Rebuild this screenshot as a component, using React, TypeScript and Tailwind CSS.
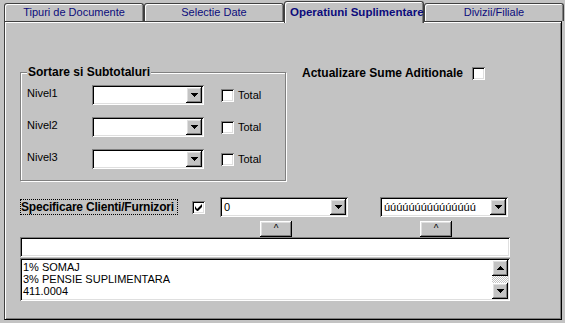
import React from "react";

const raised =
  "bg-[#c3c3c3] shadow-[inset_-1px_-1px_0_#000000,inset_1px_1px_0_#ffffff,inset_-2px_-2px_0_#808080,inset_2px_2px_0_#dfdfdf]";
const sunken =
  "bg-white shadow-[inset_1px_1px_0_#808080,inset_-1px_-1px_0_#ffffff,inset_2px_2px_0_#000000,inset_-2px_-2px_0_#dfdfdf]";

function Arrow({ up = false }: { up?: boolean }) {
  return (
    <svg width="7" height="4" viewBox="0 0 7 4" className={up ? "rotate-180" : ""}>
      <path d="M0 0h7v1H0zM1 1h5v1H1zM2 2h3v1H2zM3 3h1v1H3z" fill="#000" />
    </svg>
  );
}

function Combo({ width, value }: { width: string; value?: string }) {
  return (
    <div className={`${sunken} ${width} h-[20px] flex items-center p-[2px]`}>
      <span className="flex-1 pl-[2px] text-[11px] leading-[16px] text-black whitespace-nowrap overflow-hidden">
        {value}
      </span>
      <div className={`${raised} w-[16px] h-[16px] flex items-center justify-center`}>
        <Arrow />
      </div>
    </div>
  );
}

function Check({ checked = false }: { checked?: boolean }) {
  return (
    <div className={`${sunken} w-[13px] h-[13px] shrink-0 flex items-center justify-center`}>
      {checked && (
        <svg width="7" height="7" viewBox="0 0 7 7">
          <path d="M0 2v3l2 2h1l4-4V0L2 5z" fill="#000" />
        </svg>
      )}
    </div>
  );
}

const tabs = ["Tipuri de Documente", "Selectie Date", "Operatiuni Suplimentare", "Divizii/Filiale"];

export default function App() {
  return (
    <div className="w-[565px] h-[323px] bg-[#c3c3c3] font-['Liberation_Sans',Arial,sans-serif] text-black overflow-hidden">
      {/* Taburi */}
      <div className="flex items-end h-[21px] pl-[4px]">
        {tabs.map((t, i) =>
          i === 2 ? (
            <div
              key={t}
              className="relative z-10 w-[140px] h-[22px] -mb-[2px] bg-[#c3c3c3] border-t border-l border-r border-[#404040] rounded-t-[3px] shadow-[inset_1px_1px_0_#ffffff,inset_-1px_0_0_#808080] flex items-start pt-[3px] pl-[5px]"
            >
              <span className="text-[11.5px] leading-[14px] font-bold text-[#0c0c7c] whitespace-nowrap">{t}</span>
            </div>
          ) : (
            <div
              key={t}
              className="w-[140px] h-[18px] bg-[#c3c3c3] border-t border-l border-r border-[#404040] rounded-t-[3px] shadow-[inset_1px_1px_0_#ffffff,inset_-1px_0_0_#808080] flex items-center justify-center"
            >
              <span className="text-[11px] leading-[13px] text-[#0c0c7c] whitespace-nowrap">{t}</span>
            </div>
          )
        )}
      </div>

      {/* Pagina */}
      <div className="ml-[4px] w-[558px] h-[299px] border border-[#404040] border-r-black border-b-black shadow-[inset_1px_1px_0_#ffffff,inset_-1px_-1px_0_#808080] pl-[15px] pt-[43px]">
        <div className="flex items-start">
          <fieldset className="w-[266px] border border-[#808080] shadow-[1px_1px_0_#ffffff,inset_1px_1px_0_#ffffff] pl-[6px] pt-[6px] pb-[11px]">
            <legend className="px-[1px] bg-[#c3c3c3] text-[12px] leading-[14px] font-bold">
              Sortare si Subtotaluri
            </legend>
            <div className="flex flex-col gap-[12px]">
              {["Nivel1", "Nivel2", "Nivel3"].map((n) => (
                <div key={n} className="flex items-center h-[20px]">
                  <span className="w-[65px] text-[11px] leading-[13px] -mt-[4px]">{n}</span>
                  <Combo width="w-[112px]" />
                  <div className="ml-[17px]">
                    <Check />
                  </div>
                  <span className="ml-[4px] text-[11px] leading-[13px]">Total</span>
                </div>
              ))}
            </div>
          </fieldset>

          <div className="ml-[16px] mt-[1px] flex items-center">
            <span className="w-[170px] text-[12px] leading-[14px] font-bold">Actualizare Sume Aditionale</span>
            <Check />
          </div>
        </div>

        {/* Clienti / furnizori */}
        <div className="mt-[16px] flex items-center h-[20px]">
          <span className="w-[158px] h-[16px] border border-dotted border-black text-[12px] leading-[14px] font-bold whitespace-nowrap tracking-[-0.2px]">
            Specificare Clienti/Furnizori
          </span>
          <div className="ml-[14px]">
            <Check checked />
          </div>
          <div className="ml-[15px]">
            <Combo width="w-[128px]" value="0" />
          </div>
          <div className="ml-[32px]">
            <Combo width="w-[128px]" value="úúúúúúúúúúúúúúú" />
          </div>
        </div>

        <div className="mt-[4px] flex h-[16px]">
          <div className={`${raised} ml-[240px] w-[32px] h-[16px] flex items-center justify-center text-[10px] leading-[10px]`}>
            ^
          </div>
          <div className={`${raised} ml-[128px] w-[32px] h-[16px] flex items-center justify-center text-[10px] leading-[10px]`}>
            ^
          </div>
        </div>

        <div className={`${sunken} w-[490px] h-[20px]`} />

        <div className={`${sunken} mt-[1px] w-[490px] h-[43px] p-[2px] flex`}>
          <div className="flex-1 pl-[1px] pt-[1px] text-[11px] leading-[12px]">
            <div>1% SOMAJ</div>
            <div>3% PENSIE SUPLIMENTARA</div>
            <div>411.0004</div>
          </div>
          <div className="w-[16px] flex flex-col">
            <div className={`${raised} h-[16px] flex items-center justify-center`}>
              <Arrow up />
            </div>
            <div className="flex-1 bg-[repeating-conic-gradient(#c3c3c3_0_25%,#ffffff_0_50%)] bg-[length:2px_2px]" />
            <div className={`${raised} h-[16px] flex items-center justify-center`}>
              <Arrow />
            </div>
          </div>
        </div>
      </div>
    </div>
  );
}
